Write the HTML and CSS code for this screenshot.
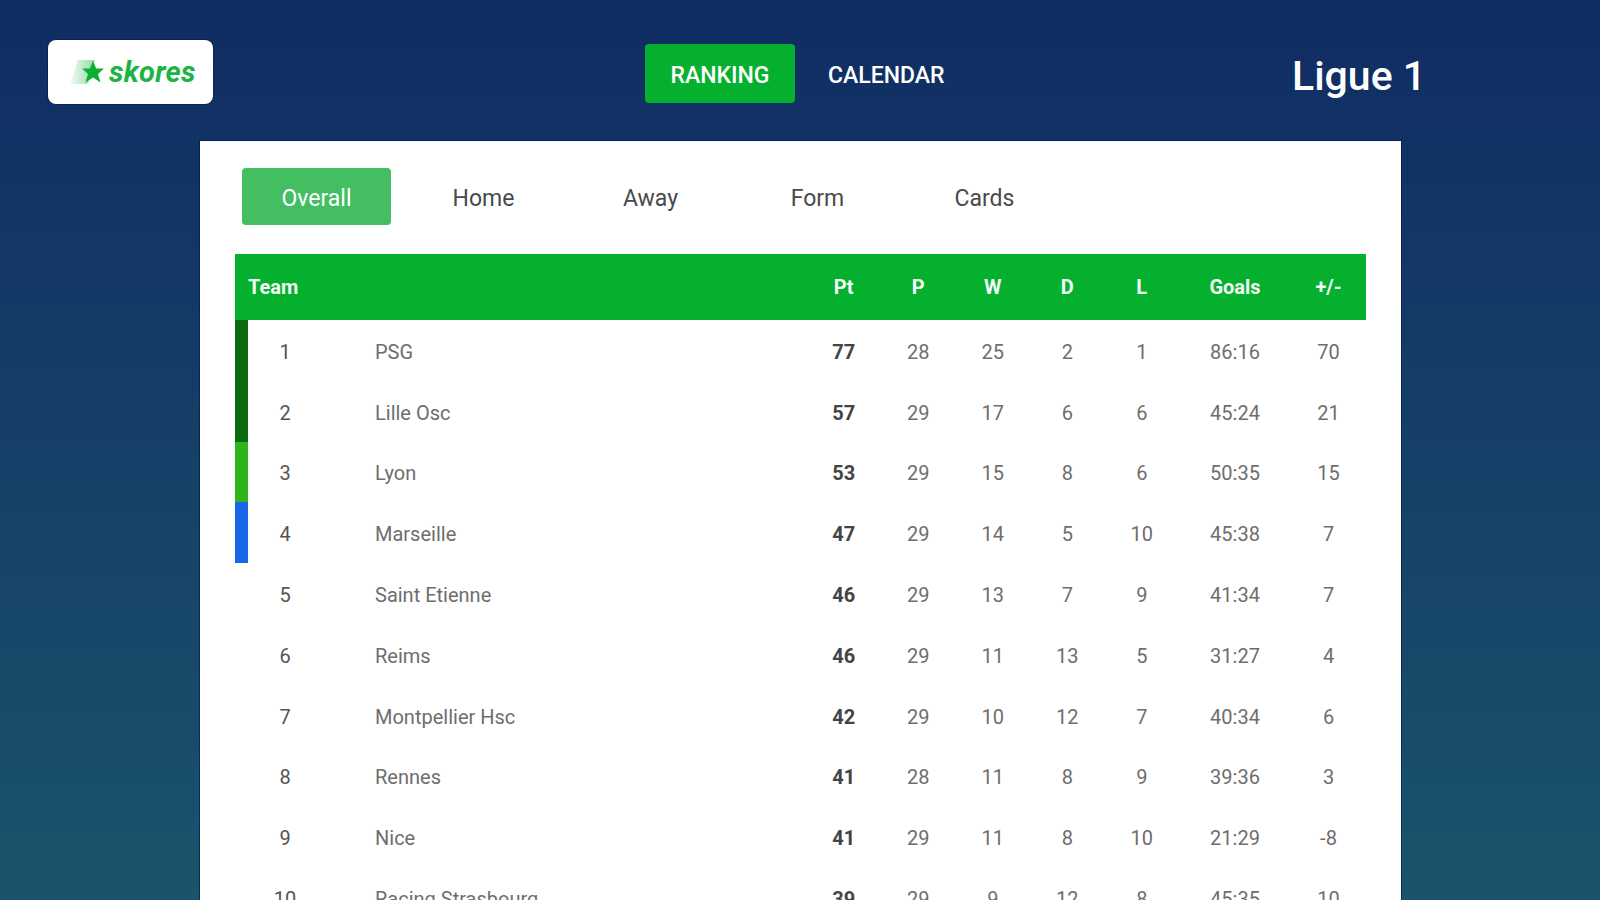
FILE: index.html
```html
<!DOCTYPE html>
<html lang="en">
<head>
  <meta charset="UTF-8" />
  <meta name="viewport" content="width=device-width, initial-scale=1.0">
  <title>Ligue 1 Ranking</title>
  <link rel="stylesheet" href="styles.css">
</head>
<body>

  <header class="top-bar">
    <div class="logo">
      <svg class="logo-star" width="40" height="30" viewBox="0 0 40 30">
        <defs>
          <linearGradient id="trail" x1="0" x2="1" y1="0" y2="0">
            <stop offset="0" stop-color="#0ab030" stop-opacity="0.05" />
            <stop offset="1" stop-color="#0ab030" stop-opacity="0.45" />
          </linearGradient>
        </defs>
        <path d="M2 27 L10 3 L27 3 L20 27 Z" fill="url(#trail)" />
        <path d="M25 4 L28.200 11.500 L36 11.500 L30 17 L32.500 25.500 L25 20.500 L17.500 25.500 L20 17 L14 11.500 L21.800 11.500 Z" fill="#0ab030" />
      </svg>
      <span class="logo-text">skores</span>
    </div>
    <nav class="main-nav">
      <a class="nav-link active">RANKING</a>
      <a class="nav-link">CALENDAR</a>
    </nav>
    <div class="league-name">Ligue 1</div>
  </header>

  <main class="card">
    <div class="tabs">
      <a class="tab active">Overall</a>
      <a class="tab">Home</a>
      <a class="tab">Away</a>
      <a class="tab">Form</a>
      <a class="tab">Cards</a>
    </div>

    <table class="ranking">
      <colgroup>
        <col class="col-zone">
        <col class="col-rank">
        <col>
        <col class="col-stat">
        <col class="col-stat">
        <col class="col-stat">
        <col class="col-stat">
        <col class="col-stat">
        <col class="col-goals">
        <col class="col-diff">
      </colgroup>
      <thead>
        <tr>
          <th class="team-head" colspan="3">Team</th>
          <th>Pt</th>
          <th>P</th>
          <th>W</th>
          <th>D</th>
          <th>L</th>
          <th>Goals</th>
          <th>+/-</th>
        </tr>
      </thead>
      <tbody>
        <tr><td class="zone zone-cl"></td><td class="rank">1</td><td class="team">PSG</td><td class="pts">77</td><td>28</td><td>25</td><td>2</td><td>1</td><td>86:16</td><td>70</td></tr>
        <tr><td class="zone zone-cl"></td><td class="rank">2</td><td class="team">Lille Osc</td><td class="pts">57</td><td>29</td><td>17</td><td>6</td><td>6</td><td>45:24</td><td>21</td></tr>
        <tr><td class="zone zone-q"></td><td class="rank">3</td><td class="team">Lyon</td><td class="pts">53</td><td>29</td><td>15</td><td>8</td><td>6</td><td>50:35</td><td>15</td></tr>
        <tr><td class="zone zone-el"></td><td class="rank">4</td><td class="team">Marseille</td><td class="pts">47</td><td>29</td><td>14</td><td>5</td><td>10</td><td>45:38</td><td>7</td></tr>
        <tr><td class="zone"></td><td class="rank">5</td><td class="team">Saint Etienne</td><td class="pts">46</td><td>29</td><td>13</td><td>7</td><td>9</td><td>41:34</td><td>7</td></tr>
        <tr><td class="zone"></td><td class="rank">6</td><td class="team">Reims</td><td class="pts">46</td><td>29</td><td>11</td><td>13</td><td>5</td><td>31:27</td><td>4</td></tr>
        <tr><td class="zone"></td><td class="rank">7</td><td class="team">Montpellier Hsc</td><td class="pts">42</td><td>29</td><td>10</td><td>12</td><td>7</td><td>40:34</td><td>6</td></tr>
        <tr><td class="zone"></td><td class="rank">8</td><td class="team">Rennes</td><td class="pts">41</td><td>28</td><td>11</td><td>8</td><td>9</td><td>39:36</td><td>3</td></tr>
        <tr><td class="zone"></td><td class="rank">9</td><td class="team">Nice</td><td class="pts">41</td><td>29</td><td>11</td><td>8</td><td>10</td><td>21:29</td><td>-8</td></tr>
        <tr><td class="zone"></td><td class="rank">10</td><td class="team">Racing Strasbourg</td><td class="pts">39</td><td>29</td><td>9</td><td>12</td><td>8</td><td>45:35</td><td>10</td></tr>
      </tbody>
    </table>
  </main>

</body>
</html>
```

FILE: styles.css
```css
* {
  box-sizing: border-box;
}

html, body {
  margin: 0;
  height: 900px;
  overflow: hidden;
}

body {
  font-family: Roboto, 'Liberation Sans', sans-serif;
  background: linear-gradient(180deg, #102c63 0%, #1a536b 100%);
  color: #fff;
}

.top-bar {
  height: 141px;
  display: grid;
  grid-template-columns: 645px 647px 1fr;
  align-items: center;
}

.logo {
  width: 165px;
  height: 64px;
  margin-left: 48px;
  margin-top: 3px;
  display: flex;
  align-items: center;
  padding-left: 20px;
  background: #fff;
  border-radius: 8px;
  box-shadow: 0 0 0 1px rgba(0, 20, 80, 0.5);
}

.logo-text {
  font-size: 29px;
  font-weight: 700;
  font-style: italic;
  color: #1cb544;
  margin-left: 1px;
  letter-spacing: 0.3px;
}

.main-nav {
  display: flex;
  align-items: center;
  margin-top: 6px;
}

.nav-link {
  font-size: 23px;
  font-weight: 500;
  height: 59px;
  line-height: 64px;
  padding: 0 26px;
  border-radius: 4px;
  margin-right: 7px;
}

.nav-link.active {
  width: 150px;
  background: #06b02f;
  text-align: center;
  padding: 0;
}

.league-name {
  font-size: 41px;
  font-weight: 500;
  margin-top: 10px;
}

.card {
  width: 1201px;
  height: 780px;
  margin-left: 200px;
  padding: 27px 35px 0;
  background: linear-gradient(0deg, #e8e8e8 3px, #fff 3px);
  box-shadow: 0 0 0 1px rgba(0, 20, 80, 0.6);
}

.tabs {
  display: flex;
  height: 57px;
  margin-left: 7px;
  margin-bottom: 29px;
}

.tab {
  width: 149px;
  margin-right: 18px;
  line-height: 62px;
  text-align: center;
  font-size: 23px;
  color: #4a4a4a;
  border-radius: 4px;
}

.tab.active {
  background: #43bf62;
  color: #fff;
}

.ranking {
  width: 1131px;
  table-layout: fixed;
  border-collapse: collapse;
  background: #fff;
}

.col-zone {
  width: 13px;
}

.col-rank {
  width: 74px;
}

.col-stat {
  width: 74.500px;
}

.col-goals {
  width: 112px;
}

.col-diff {
  width: 75px;
}

.ranking th {
  height: 66px;
  padding: 0;
  background: #05b02e;
  color: #f2fbf4;
  font-size: 20px;
  font-weight: 700;
  text-align: center;
}

.ranking th.team-head {
  text-align: left;
  padding-left: 13px;
}

.ranking td {
  height: 60.800px;
  padding: 3px 0 0;
  text-align: center;
  font-size: 20px;
  color: #6e6e6e;
}

.ranking td.rank {
  color: #555;
}

.ranking td.team {
  text-align: left;
  padding-left: 53px;
}

.ranking td.pts {
  font-weight: 700;
  color: #444;
}

.zone-cl {
  background: #0c6a10;
}

.zone-q {
  background: #2fb51c;
}

.zone-el {
  background: #1a66e8;
}
```
